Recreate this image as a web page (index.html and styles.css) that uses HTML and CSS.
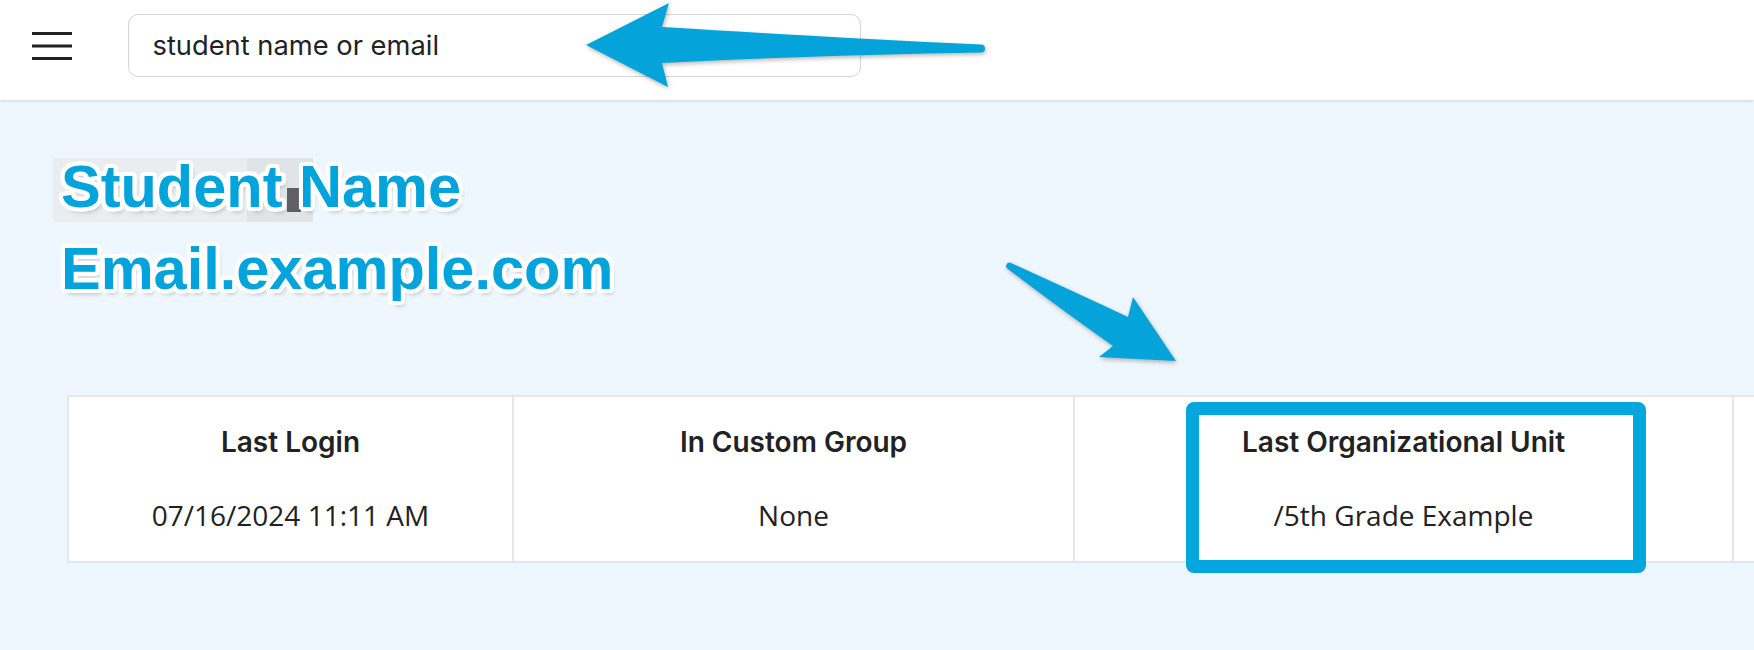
FILE: index.html
```html
<!DOCTYPE html>
<html lang="en">
<head>
<meta charset="utf-8">
<title>Student lookup</title>
<link rel="stylesheet" href="styles.css">
</head>
<body>
<header class="topbar">
  <button class="menu-btn" aria-label="Menu">
    <svg width="40" height="28" viewBox="0 0 40 28"><rect x="0" y="0" width="40" height="3" fill="#222"/><rect x="0" y="12.5" width="40" height="3" fill="#222"/><rect x="0" y="25" width="40" height="3" fill="#222"/></svg>
  </button>
  <div class="search">student name or email</div>
</header>
<main class="content">
  <div class="title-wrap">
    <span class="smudge smudge-a"></span>
    <span class="smudge smudge-b"></span>
    <span class="smudge smudge-c"></span>
    <h1 class="student-title">Student Name<br>Email.example.com</h1>
  </div>
  <div class="info-table">
    <div class="cell">
      <div class="cell-head">Last Login</div>
      <div class="cell-value">07/16/2024 11:11 AM</div>
    </div>
    <div class="cell">
      <div class="cell-head">In Custom Group</div>
      <div class="cell-value">None</div>
    </div>
    <div class="cell">
      <div class="cell-head">Last Organizational Unit</div>
      <div class="cell-value">/5th Grade Example</div>
    </div>
    <div class="cell cell-last"></div>
  </div>
</main>
<div class="highlight-box"></div>
<svg class="annotations" width="1754" height="650" viewBox="0 0 1754 650">
  <path class="arrow" d="M586,45 L669,3 L662,27 C760,33 880,40 981,44.5 A4,4 0 0 1 981,52.5 C880,54 760,58 662,63 L668,87 Z"/>
  <path class="arrow" d="M1011,263 Q1075,292 1128,317 L1133,297 L1176,361 L1099,357 L1113,346 Q1055,305 1008,269 A3,3 0 0 1 1011,263 Z"/>
</svg>
</body>
</html>
```

FILE: styles.css
```css
html, body {
  margin: 0;
  padding: 0;
}
body {
  width: 1754px;
  height: 650px;
  overflow: hidden;
  background: #eef7fe;
  font-family: "Inter", "Liberation Sans", sans-serif;
  color: #222;
  position: relative;
}
.topbar {
  box-sizing: border-box;
  height: 100px;
  padding: 0 0 9px 32px;
  background: #fff;
  display: flex;
  align-items: center;
  gap: 56px;
  box-shadow: 0 1px 3px rgba(0, 0, 0, 0.14);
  position: relative;
  z-index: 1;
}
.menu-btn {
  border: 0;
  padding: 0;
  margin: 0;
  background: none;
  width: 40px;
  height: 28px;
  display: block;
}
.menu-btn svg {
  display: block;
}
.search {
  box-sizing: border-box;
  width: 733px;
  height: 63px;
  border: 1.5px solid #d4d4d4;
  border-radius: 10px;
  padding-left: 23.5px;
  display: flex;
  align-items: center;
  font-family: "Inter", sans-serif;
  font-size: 27.3px;
  color: #222;
}
.content {
  padding: 46px 0 0 64px;
}
.title-wrap {
  position: relative;
  margin-left: -3px;
}
.smudge {
  position: absolute;
  display: block;
}
.smudge-a {
  left: -8px;
  top: 12px;
  width: 196px;
  height: 64px;
  background: #eaedf0;
}
.smudge-b {
  left: 186px;
  top: 12px;
  width: 66px;
  height: 64px;
  background: #e1e4e7;
}
.smudge-c {
  left: 226px;
  top: 42px;
  width: 14px;
  height: 24px;
  background: #5d6166;
}
.student-title {
  position: relative;
  margin: 0;
  font-family: "Liberation Sans", Arial, sans-serif;
  font-weight: 700;
  font-size: 59.5px;
  line-height: 82px;
  color: #03a3dc;
  text-shadow:
    4px 0 0 #fff, -4px 0 0 #fff, 0 4px 0 #fff, 0 -4px 0 #fff,
    3px 3px 0 #fff, -3px 3px 0 #fff, 3px -3px 0 #fff, -3px -3px 0 #fff,
    4px 2px 0 #fff, -4px 2px 0 #fff, 2px 4px 0 #fff, 2px -4px 0 #fff,
    -2px 4px 0 #fff, -2px -4px 0 #fff, 4px -2px 0 #fff, -4px -2px 0 #fff,
    3px 5px 4px rgba(0, 0, 0, 0.22);
}
.info-table {
  margin: 85px 0 0 3px;
  display: grid;
  grid-template-columns: 445px 561px 659px 400px;
  border-top: 2px solid #e3e6ea;
  border-bottom: 2px solid #e3e6ea;
  border-left: 2px solid #e3e6ea;
  background: #fff;
  width: max-content;
}
.cell {
  box-sizing: border-box;
  border-right: 2px solid #e3e6ea;
  height: 164px;
  padding-top: 28px;
  text-align: center;
}
.cell-head {
  font-family: "Inter", sans-serif;
  font-weight: 600;
  font-size: 28px;
  line-height: 34px;
  color: #222;
}
.cell-value {
  margin-top: 37px;
  font-family: "Open Sans", "Noto Sans", sans-serif;
  font-size: 28px;
  line-height: 38px;
  color: #222;
}
.highlight-box {
  position: absolute;
  left: 1186px;
  top: 402px;
  width: 460px;
  height: 171px;
  box-sizing: border-box;
  border: 13px solid #03a6dd;
  border-radius: 8px;
  z-index: 2;
}
.annotations {
  position: absolute;
  left: 0;
  top: 0;
  z-index: 3;
  pointer-events: none;
}
.arrow {
  fill: #04a3da;
  filter: drop-shadow(1px 2px 2px rgba(0, 0, 0, 0.28));
}
```
